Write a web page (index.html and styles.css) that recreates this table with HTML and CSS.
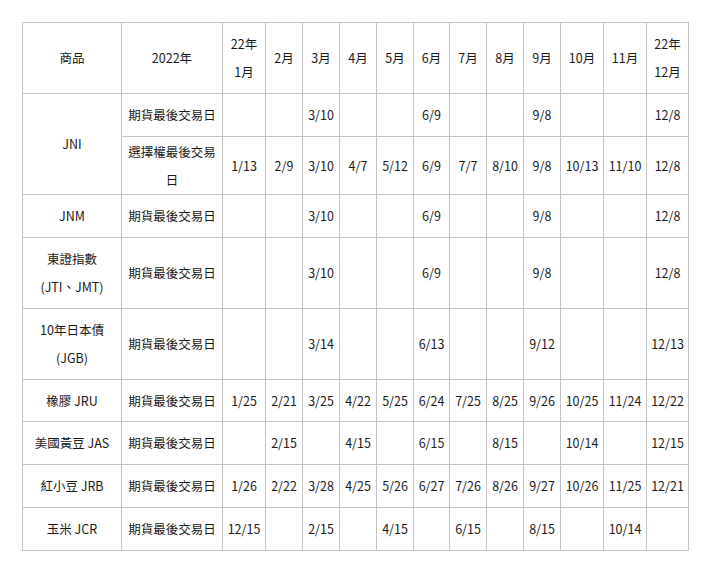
FILE: index.html
```html
<!DOCTYPE html>
<html lang="zh-Hant">
<head>
<meta charset="utf-8">
<link rel="stylesheet" href="styles.css">
</head>
<body>
<table class="sched">
<colgroup>
<col class="c-prod"><col class="c-type">
<col class="c-m43"><col class="c-m37"><col class="c-m37"><col class="c-m37"><col class="c-m37"><col class="c-m36"><col class="c-m37"><col class="c-m37"><col class="c-m37"><col class="c-m43"><col class="c-m43"><col class="c-m42">
</colgroup>
<tr class="h71"><td>商品</td><td>2022年</td><td>22年<br>1月</td><td>2月</td><td>3月</td><td>4月</td><td>5月</td><td>6月</td><td>7月</td><td>8月</td><td>9月</td><td>10月</td><td>11月</td><td>22年<br>12月</td></tr>
<tr class="h43"><td rowspan="2">JNI</td><td>期貨最後交易日</td><td></td><td></td><td>3/10</td><td></td><td></td><td>6/9</td><td></td><td></td><td>9/8</td><td></td><td></td><td>12/8</td></tr>
<tr class="h58"><td class="wrap">選擇權最後交易日</td><td>1/13</td><td>2/9</td><td>3/10</td><td>4/7</td><td>5/12</td><td>6/9</td><td>7/7</td><td>8/10</td><td>9/8</td><td>10/13</td><td>11/10</td><td>12/8</td></tr>
<tr class="h43"><td>JNM</td><td>期貨最後交易日</td><td></td><td></td><td>3/10</td><td></td><td></td><td>6/9</td><td></td><td></td><td>9/8</td><td></td><td></td><td>12/8</td></tr>
<tr class="h71"><td>東證指數<br>(JTI、JMT)</td><td>期貨最後交易日</td><td></td><td></td><td>3/10</td><td></td><td></td><td>6/9</td><td></td><td></td><td>9/8</td><td></td><td></td><td>12/8</td></tr>
<tr class="h71"><td>10年日本債<br>(JGB)</td><td>期貨最後交易日</td><td></td><td></td><td>3/14</td><td></td><td></td><td>6/13</td><td></td><td></td><td>9/12</td><td></td><td></td><td>12/13</td></tr>
<tr class="h42"><td>橡膠 JRU</td><td>期貨最後交易日</td><td>1/25</td><td>2/21</td><td>3/25</td><td>4/22</td><td>5/25</td><td>6/24</td><td>7/25</td><td>8/25</td><td>9/26</td><td>10/25</td><td>11/24</td><td>12/22</td></tr>
<tr class="h43"><td>美國黃豆 JAS</td><td>期貨最後交易日</td><td></td><td>2/15</td><td></td><td>4/15</td><td></td><td>6/15</td><td></td><td>8/15</td><td></td><td>10/14</td><td></td><td>12/15</td></tr>
<tr class="h43"><td>紅小豆 JRB</td><td>期貨最後交易日</td><td>1/26</td><td>2/22</td><td>3/28</td><td>4/25</td><td>5/26</td><td>6/27</td><td>7/26</td><td>8/26</td><td>9/27</td><td>10/26</td><td>11/25</td><td>12/21</td></tr>
<tr class="h43"><td>玉米 JCR</td><td>期貨最後交易日</td><td>12/15</td><td></td><td>2/15</td><td></td><td>4/15</td><td></td><td>6/15</td><td></td><td>8/15</td><td></td><td>10/14</td><td></td></tr>
</table>
</body>
</html>
```
FILE: styles.css
```css
html, body {
  margin: 0;
  padding: 0;
  background: #ffffff;
}
body {
  padding: 22px 0 0 22px;
  font-family: "Noto Sans CJK TC", "Noto Sans", sans-serif;
  font-size: 12.5px;
  color: #1a1a1a;
}
.sched {
  border-collapse: collapse;
  table-layout: fixed;
  width: 667px;
}
.sched td {
  border: 1px solid #c4c4c4;
  padding: 0 3px;
  text-align: center;
  vertical-align: middle;
  line-height: 28px;
  overflow: hidden;
}
.sched td.wrap {
  text-align: center;
}
.c-prod { width: 99px; }
.c-type { width: 101px; }
.c-m43 { width: 43px; }
.c-m42 { width: 42px; }
.c-m37 { width: 37px; }
.c-m36 { width: 36px; }
.h71 { height: 71px; }
.h58 { height: 58px; }
.h43 { height: 43px; }
.h42 { height: 42px; }
```
